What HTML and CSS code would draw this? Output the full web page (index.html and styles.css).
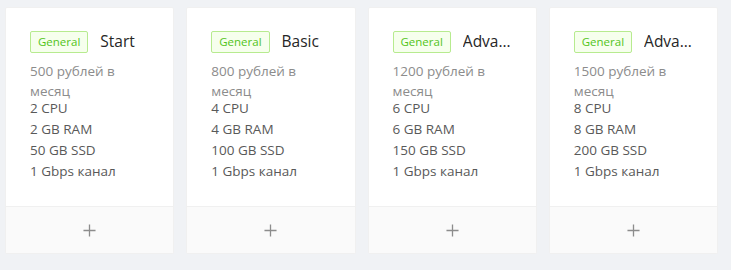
FILE: index.html
```html
<!DOCTYPE html>
<html lang="ru">
<head>
<meta charset="utf-8">
<link rel="stylesheet" href="styles.css">
</head>
<body>
<div class="grid">
  <div class="card">
    <div class="body">
      <div class="head"><span class="tag">General</span><span class="title">Start</span></div>
      <div class="desc">500 рублей в месяц</div>
      <div class="specs"><div>2 CPU</div><div>2 GB RAM</div><div>50 GB SSD</div><div>1 Gbps канал</div></div>
    </div>
    <div class="actions"><svg class="plus" viewBox="0 0 14 14"><path d="M7 0.5V13.5M0.5 7H13.5"/></svg></div>
  </div>
  <div class="card">
    <div class="body">
      <div class="head"><span class="tag">General</span><span class="title">Basic</span></div>
      <div class="desc">800 рублей в месяц</div>
      <div class="specs"><div>4 CPU</div><div>4 GB RAM</div><div>100 GB SSD</div><div>1 Gbps канал</div></div>
    </div>
    <div class="actions"><svg class="plus" viewBox="0 0 14 14"><path d="M7 0.5V13.5M0.5 7H13.5"/></svg></div>
  </div>
  <div class="card">
    <div class="body">
      <div class="head"><span class="tag">General</span><span class="title">Advanced</span></div>
      <div class="desc">1200 рублей в месяц</div>
      <div class="specs"><div>6 CPU</div><div>6 GB RAM</div><div>150 GB SSD</div><div>1 Gbps канал</div></div>
    </div>
    <div class="actions"><svg class="plus" viewBox="0 0 14 14"><path d="M7 0.5V13.5M0.5 7H13.5"/></svg></div>
  </div>
  <div class="card">
    <div class="body">
      <div class="head"><span class="tag">General</span><span class="title">Advanced Pro</span></div>
      <div class="desc">1500 рублей в месяц</div>
      <div class="specs"><div>8 CPU</div><div>8 GB RAM</div><div>200 GB SSD</div><div>1 Gbps канал</div></div>
    </div>
    <div class="actions"><svg class="plus" viewBox="0 0 14 14"><path d="M7 0.5V13.5M0.5 7H13.5"/></svg></div>
  </div>
</div>
</body>
</html>
```
FILE: styles.css
```css
* { box-sizing: border-box; }
html, body { margin: 0; padding: 0; }
body {
  background: #f0f2f5;
  font-family: "Open Sans", "Noto Sans", sans-serif;
  font-size: 13.5px;
  color: #595959;
  width: 731px;
  height: 270px;
  overflow: hidden;
}
.grid {
  display: grid;
  grid-template-columns: repeat(4, minmax(0, 1fr));
  column-gap: 12px;
  width: 713px;
  margin: 7px 0 0 5px;
}
.card {
  background: #fff;
  border: 1px solid #f0f0f0;
  border-radius: 2px;
  display: flex;
  flex-direction: column;
  min-width: 0;
}
.body { flex: 1; padding: 22px 24px 24px; min-width: 0; }
.head {
  display: flex;
  align-items: center;
  height: 24px;
  margin-bottom: 7px;
}
.tag {
  flex: none;
  font-size: 11.5px;
  line-height: 20px;
  padding: 0 7px;
  color: #52c41a;
  background: #f6ffed;
  border: 1px solid #b7eb8f;
  border-radius: 2px;
  margin-right: 12px;
}
.title {
  flex: 1;
  min-width: 0;
  font-size: 15.5px;
  line-height: 24px;
  padding-bottom: 2px;
  color: #262626;
  white-space: nowrap;
  overflow: hidden;
  text-overflow: ellipsis;
}
.desc {
  color: #8c8c8c;
  line-height: 20px;
}
.specs { line-height: 21px; margin-top: -3px; }
.actions {
  border-top: 1px solid #f0f0f0;
  background: #fafafa;
  height: 47px;
  display: flex;
  align-items: center;
  justify-content: center;
}
.plus { width: 13px; height: 13px; }
.plus path { stroke: #8c8c8c; stroke-width: 1.4; fill: none; }
```
